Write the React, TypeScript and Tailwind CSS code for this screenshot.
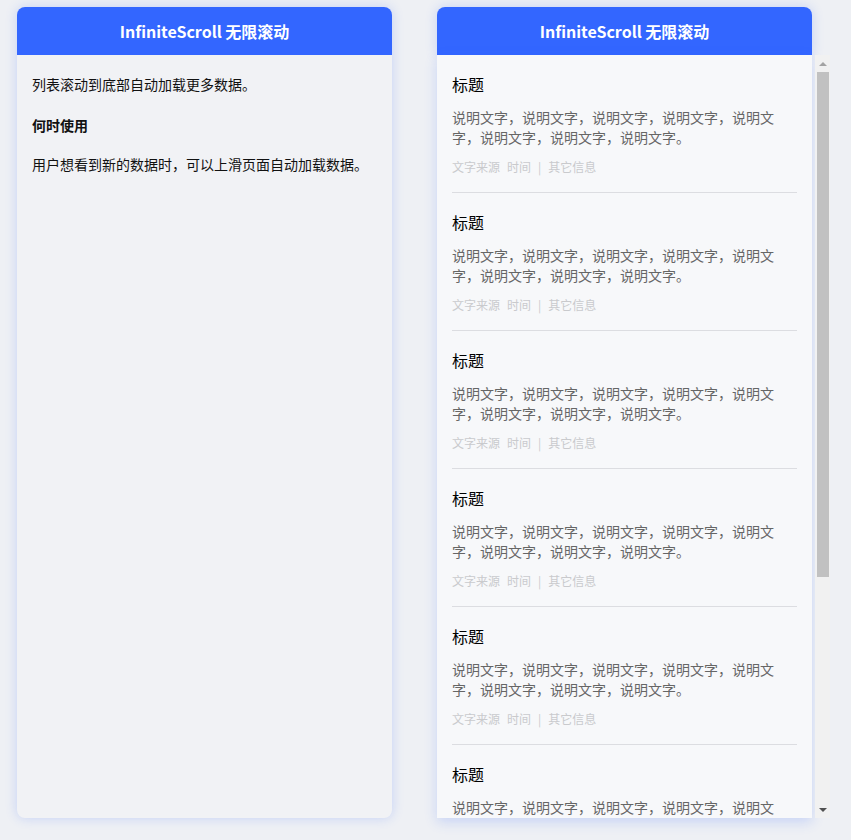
const items = Array.from({ length: 8 }, (_, i) => i);

const font = {
  fontFamily: '"Noto Sans CJK SC", "Noto Sans", sans-serif',
};

const CardHeader = () => (
  <div className="flex h-12 shrink-0 items-center justify-center rounded-t-lg bg-[#3366ff] text-base font-bold text-white">
    InfiniteScroll 无限滚动
  </div>
);

const ScrollBar = () => (
  <div className="ml-[3px] flex h-[763px] w-[15px] flex-col bg-[#f1f1f1]">
    <div className="flex h-[17px] shrink-0 items-center justify-center">
      <div className="h-0 w-0 border-x-[4px] border-b-[4px] border-x-transparent border-b-[#a3a3a3]" />
    </div>
    <div className="ml-[2px] h-[505px] w-[12px] shrink-0 bg-[#c1c1c1]" />
    <div className="flex-1" />
    <div className="flex h-[17px] shrink-0 items-center justify-center">
      <div className="h-0 w-0 border-x-[4px] border-t-[4px] border-x-transparent border-t-[#505050]" />
    </div>
  </div>
);

export default function App() {
  return (
    <div
      className="flex h-[840px] w-[851px] gap-[45px] bg-[#eef0f4] pl-[17px] pt-[7px]"
      style={font}
    >
      <div className="flex h-[811px] w-[375px] flex-col rounded-lg bg-[#f1f2f5] shadow-[0_0_12px_rgba(51,102,255,0.22)]">
        <CardHeader />
        <div className="flex flex-col px-[15px] pt-[19px] text-sm text-[#111]">
          <p className="leading-5">列表滚动到底部自动加载更多数据。</p>
          <p className="mt-[21px] font-bold leading-5">何时使用</p>
          <p className="mt-[19px] leading-5">
            用户想看到新的数据时，可以上滑页面自动加载数据。
          </p>
        </div>
      </div>

      <div className="flex h-[811px] flex-col">
        <div className="w-[375px] rounded-t-lg shadow-[0_0_12px_rgba(51,102,255,0.22)]">
          <CardHeader />
        </div>
        <div className="flex">
          <div className="h-[763px] w-[375px] overflow-hidden bg-[#f7f8fa] px-[15px] shadow-[0_4px_12px_rgba(51,102,255,0.2)]">
            {items.map((i) => (
              <div key={i} className="border-b border-[#dcdde1] pb-4 pt-[18px]">
                <div className="text-base leading-[22px] text-black">标题</div>
                <p className="mt-3 text-sm leading-5 text-[#666]">
                  说明文字，说明文字，说明文字，说明文字，说明文字，说明文字，说明文字，说明文字。
                </p>
                <div className="mt-[11px] flex gap-[7px] text-xs leading-[18px] text-[#c9cacd]">
                  <span>文字来源</span>
                  <span>时间</span>
                  <span>|</span>
                  <span>其它信息</span>
                </div>
              </div>
            ))}
          </div>
          <ScrollBar />
        </div>
      </div>
    </div>
  );
}
